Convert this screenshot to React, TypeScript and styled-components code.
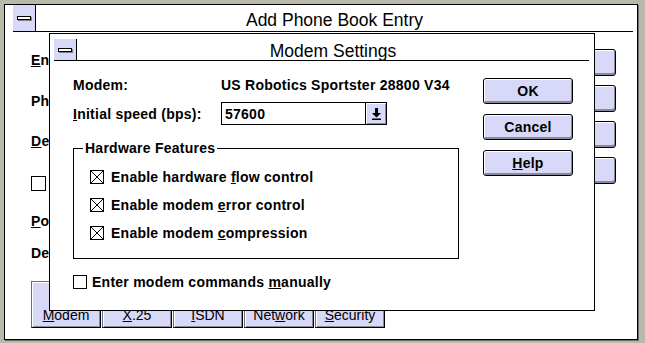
import styled, { createGlobalStyle } from "styled-components";

const GlobalStyle = createGlobalStyle`
  html, body {
    margin: 0;
    padding: 0;
    background: #b9b9ab;
  }
  body {
    font-family: "Liberation Sans", Arial, sans-serif;
    color: #000;
  }
`;

const LAVENDER = "#d8d8f8";

const Desktop = styled.div`
  position: relative;
  width: 645px;
  height: 343px;
  padding: 4px 0 0 4px;
  box-sizing: border-box;
  overflow: hidden;
`;

const Window = styled.div`
  width: 634px;
  height: 336px;
  box-sizing: border-box;
  background: #fff;
  border: 1px solid #000;
  box-shadow: 1px 1px 0 #6f6f66;
  padding: 0 4px 0 8px;
  display: flex;
  flex-direction: column;
`;

const TitleBar = styled.div<{ $height: number }>`
  display: flex;
  align-items: stretch;
  height: ${(p) => p.$height}px;
  border-bottom: 1px solid #000;
  flex-shrink: 0;
`;

const SysBox = styled.div`
  width: 22px;
  background: ${LAVENDER};
  border-right: 1px solid #000;
  display: flex;
  align-items: center;
  justify-content: center;
`;

const SysDash = styled.span`
  width: 12px;
  height: 2px;
  background: #fff;
  border: 1px solid #000;
  box-shadow: 1px 1px 0 #808080;
`;

const Title = styled.div<{ $drop: number }>`
  flex: 1;
  display: flex;
  align-items: center;
  justify-content: center;
  font-size: 17.5px;
  padding-top: ${(p) => p.$drop}px;
`;

const WindowBody = styled.div`
  flex: 1;
  display: flex;
`;

const Fields = styled.div`
  flex: 1;
  display: flex;
  flex-direction: column;
  padding-left: 18px;
`;

const FieldRow = styled.div<{ $gap: number }>`
  height: 20px;
  margin-top: ${(p) => p.$gap}px;
  display: flex;
  align-items: center;
  gap: 8px;
  font-size: 14px;
  font-weight: bold;
  letter-spacing: 0.25px;
  white-space: nowrap;
`;

const SideButtons = styled.div<{ $top: number; $gap: number; $width: number; $right?: number }>`
  display: flex;
  flex-direction: column;
  gap: ${(p) => p.$gap}px;
  padding-top: ${(p) => p.$top}px;
  width: ${(p) => p.$width}px;
  margin-right: ${(p) => p.$right ?? 0}px;
`;

const PushButton = styled.button<{ $height: number }>`
  height: ${(p) => p.$height}px;
  box-sizing: border-box;
  border: 1px solid #000;
  border-radius: 3px;
  background: ${LAVENDER};
  box-shadow: inset 1px 1px 0 #fff, inset -1px -2px 0 #8a8a9a;
  font-family: "Liberation Sans", Arial, sans-serif;
  font-size: 14px;
  font-weight: bold;
  letter-spacing: 0.25px;
  color: #000;
  padding: 0 0 1px;
`;

const TabRow = styled.div`
  display: flex;
  gap: 1px;
  margin-top: 18px;
`;

const Tab = styled.div`
  width: 70px;
  height: 47px;
  box-sizing: border-box;
  background: ${LAVENDER};
  border: 1px solid #000;
  border-top-color: #6a6a7a;
  border-left-color: #6a6a7a;
  box-shadow: inset 1px 1px 0 #fff, inset -1px -1px 0 #8a8a9a;
  display: flex;
  align-items: flex-end;
  justify-content: center;
  padding-bottom: 4px;
  font-size: 14px;
`;

const PlainBox = styled.span<{ $size: number }>`
  width: ${(p) => p.$size}px;
  height: ${(p) => p.$size}px;
  box-sizing: border-box;
  border: 1px solid #000;
  background: #fff;
  flex-shrink: 0;
  display: inline-flex;
`;

/* ---------- modem settings dialog ---------- */

const Dialog = styled.div`
  position: absolute;
  left: 49px;
  top: 33px;
  width: 546px;
  height: 278px;
  box-sizing: border-box;
  background: #fff;
  border: 1px solid #000;
  padding: 5px 5px 5px 4px;
  display: flex;
  flex-direction: column;
`;

const DialogBody = styled.div`
  flex: 1;
  display: flex;
  padding: 0 16px 0 19px;
`;

const Form = styled.div`
  flex: 1;
  display: flex;
  flex-direction: column;
  font-size: 14px;
  font-weight: bold;
  letter-spacing: 0.25px;
  white-space: nowrap;
`;

const InfoRow = styled.div<{ $gap: number; $height: number }>`
  display: flex;
  align-items: center;
  height: ${(p) => p.$height}px;
  margin-top: ${(p) => p.$gap}px;
`;

const Label = styled.span`
  width: 148px;
`;

const Select = styled.div`
  width: 166px;
  height: 23px;
  box-sizing: border-box;
  border: 1px solid #000;
  display: flex;
  align-items: stretch;
`;

const SelectValue = styled.span`
  flex: 1;
  padding-left: 3px;
  display: flex;
  align-items: center;
`;

const DropButton = styled.span`
  width: 20px;
  border-left: 1px solid #000;
  background: ${LAVENDER};
  box-shadow: inset 1px 1px 0 #fff, inset -1px -1px 0 #8a8a9a;
  display: flex;
  align-items: center;
  justify-content: center;
`;

const Group = styled.fieldset`
  width: 386px;
  box-sizing: border-box;
  margin: 15px 0 0;
  padding: 0;
  border: 1px solid #000;
`;

const Legend = styled.legend`
  margin-left: 9px;
  padding: 0 2px;
  line-height: 16px;
`;

const CheckList = styled.div`
  display: flex;
  flex-direction: column;
  gap: 8px;
  padding: 11px 0 15px 16px;
`;

const CheckRow = styled.label<{ $gap?: number; $space: number }>`
  display: flex;
  align-items: center;
  gap: ${(p) => p.$space}px;
  height: 20px;
  margin-top: ${(p) => p.$gap ?? 0}px;
`;

const Cross = () => (
  <svg width="12" height="12" viewBox="0 0 12 12">
    <path d="M0 0L12 12M12 0L0 12" stroke="#000" strokeWidth="1" />
  </svg>
);

const DownArrow = () => (
  <svg width="9" height="12" viewBox="0 0 9 12">
    <path d="M3 0h3v5h3L4.5 9.5 0 5h3z" fill="#000" />
    <rect x="0" y="10.5" width="9" height="1.5" fill="#000" />
  </svg>
);

const CheckBox = ({ checked, size = 14 }: { checked?: boolean; size?: number }) => (
  <PlainBox $size={size}>{checked && <Cross />}</PlainBox>
);

export default function App() {
  return (
    <>
      <GlobalStyle />
      <Desktop>
        <Window>
          <TitleBar $height={26}>
            <SysBox>
              <SysDash />
            </SysBox>
            <Title $drop={4}>Add Phone Book Entry</Title>
          </TitleBar>
          <WindowBody>
            <Fields>
              <FieldRow $gap={18}>
                <span>
                  <u>E</u>ntry name:
                </span>
              </FieldRow>
              <FieldRow $gap={21}>Phone number:</FieldRow>
              <FieldRow $gap={20}>
                <span>
                  <u>D</u>escription:
                </span>
              </FieldRow>
              <FieldRow $gap={22}>
                <CheckBox size={15} />
              </FieldRow>
              <FieldRow $gap={18}>
                <span>
                  <u>P</u>ort:
                </span>
              </FieldRow>
              <FieldRow $gap={12}>Device:</FieldRow>
              <TabRow>
                <Tab>
                  <span>
                    <u>M</u>odem
                  </span>
                </Tab>
                <Tab>
                  <span>
                    <u>X</u>.25
                  </span>
                </Tab>
                <Tab>
                  <span>
                    <u>I</u>SDN
                  </span>
                </Tab>
                <Tab>
                  <span>
                    Net<u>w</u>ork
                  </span>
                </Tab>
                <Tab>
                  <span>
                    <u>S</u>ecurity
                  </span>
                </Tab>
              </TabRow>
            </Fields>
            <SideButtons $top={17} $gap={9} $width={88} $right={17}>
              <PushButton $height={27}>OK</PushButton>
              <PushButton $height={27}>Cancel</PushButton>
              <PushButton $height={27}>More</PushButton>
              <PushButton $height={27}>Help</PushButton>
            </SideButtons>
          </WindowBody>
        </Window>

        <Dialog>
          <TitleBar $height={21}>
            <SysBox>
              <SysDash />
            </SysBox>
            <Title $drop={3}>Modem Settings</Title>
          </TitleBar>
          <DialogBody>
            <Form>
              <InfoRow $gap={14} $height={20}>
                <Label>Modem:</Label>
                <span>US Robotics Sportster 28800 V34</span>
              </InfoRow>
              <InfoRow $gap={7} $height={23}>
                <Label>
                  <u>I</u>nitial speed (bps):
                </Label>
                <Select>
                  <SelectValue>57600</SelectValue>
                  <DropButton>
                    <DownArrow />
                  </DropButton>
                </Select>
              </InfoRow>
              <Group>
                <Legend>Hardware Features</Legend>
                <CheckList>
                  <CheckRow $space={7}>
                    <CheckBox checked />
                    <span>
                      Enable hardware <u>f</u>low control
                    </span>
                  </CheckRow>
                  <CheckRow $space={7}>
                    <CheckBox checked />
                    <span>
                      Enable modem <u>e</u>rror control
                    </span>
                  </CheckRow>
                  <CheckRow $space={7}>
                    <CheckBox checked />
                    <span>
                      Enable modem <u>c</u>ompression
                    </span>
                  </CheckRow>
                </CheckList>
              </Group>
              <CheckRow $gap={13} $space={5}>
                <CheckBox />
                <span>
                  Enter modem commands <u>m</u>anually
                </span>
              </CheckRow>
            </Form>
            <SideButtons $top={17} $gap={10} $width={90}>
              <PushButton $height={26}>OK</PushButton>
              <PushButton $height={26}>Cancel</PushButton>
              <PushButton $height={26}>
                <u>H</u>elp
              </PushButton>
            </SideButtons>
          </DialogBody>
        </Dialog>
      </Desktop>
    </>
  );
}
